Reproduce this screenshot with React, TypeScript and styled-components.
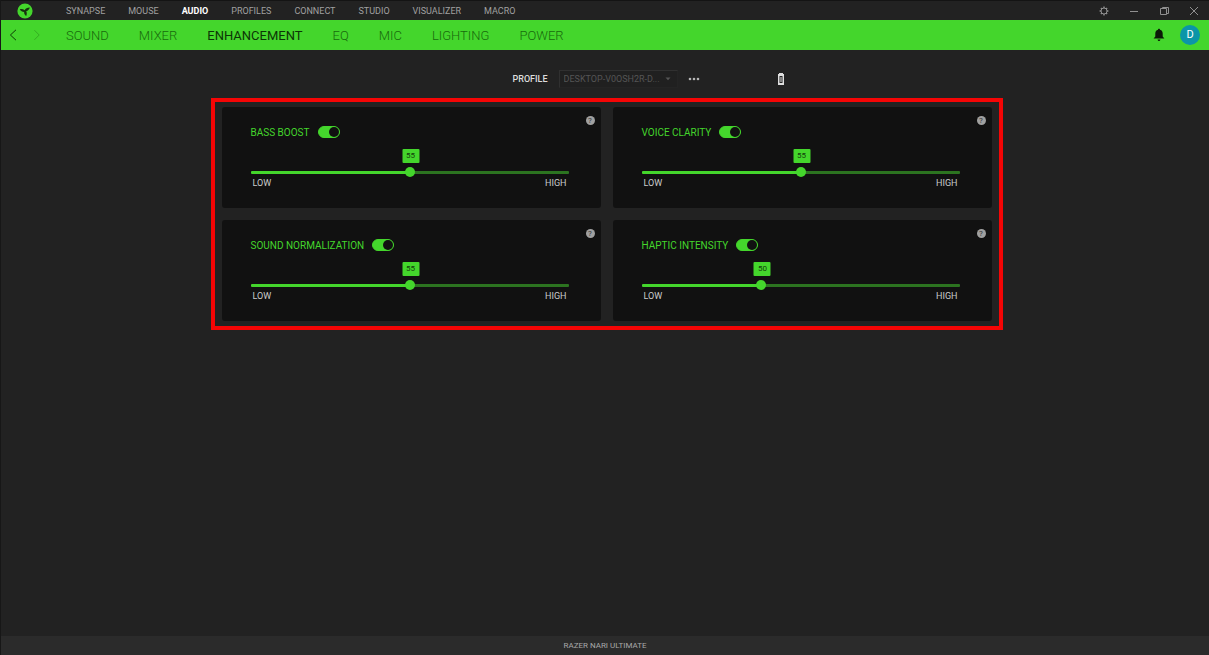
import React, { useState } from "react";
import styled, { createGlobalStyle } from "styled-components";

const GREEN = "#44d62c";

const GlobalStyle = createGlobalStyle`
  *, *::before, *::after { box-sizing: border-box; }
  body {
    margin: 0;
    background: #222222;
    color: #cccccc;
    font-family: Roboto, "Liberation Sans", sans-serif;
  }
  button, input, select { font: inherit; color: inherit; }
`;

const Window = styled.div`
  display: flex;
  flex-direction: column;
  min-height: 100vh;
  border-left: 1px solid #171717;
`;

const TitleBar = styled.header`
  display: flex;
  align-items: center;
  height: 20px;
  padding: 0 8px 0 16px;
  border-top: 1px solid #141414;
`;

const Logo = styled.svg`
  display: block;
  flex: none;
  width: 16px;
  height: 16px;
`;

const ModuleNav = styled.nav`
  display: flex;
  gap: 23px;
  flex: 1;
  margin-left: 33px;
`;

const ModuleLink = styled.a<{ $active?: boolean }>`
  color: ${(p) => (p.$active ? "#ffffff" : "#a0a0a0")};
  font-size: 9px;
  line-height: 12px;
  font-weight: ${(p) => (p.$active ? 700 : 400)};
  text-decoration: none;
`;

const WindowControls = styled.div`
  display: flex;
  gap: 16px;
`;

const IconButton = styled.button<{ $tone?: string }>`
  display: flex;
  align-items: center;
  justify-content: center;
  min-width: 14px;
  height: 14px;
  padding: 0;
  border: 0;
  background: none;
  color: ${(p) => p.$tone ?? "#909090"};
  cursor: pointer;
`;

const TabBar = styled.div`
  display: flex;
  align-items: center;
  height: 30px;
  padding: 0 9px 0 5px;
  background: ${GREEN};
`;

const History = styled.div`
  display: flex;
  gap: 10px;
`;

const TabNav = styled.nav`
  display: flex;
  gap: 30px;
  flex: 1;
  margin-left: 22px;
  padding-top: 2px;
`;

const TabLink = styled.a<{ $active?: boolean }>`
  color: ${(p) => (p.$active ? "#0c3506" : "#186a0c")};
  font-size: 13px;
  line-height: 18px;
  font-weight: ${(p) => (p.$active ? 400 : 300)};
  text-decoration: none;
`;

const Account = styled.div`
  display: flex;
  align-items: center;
  gap: 14px;
`;

const Avatar = styled.button`
  width: 20px;
  height: 20px;
  padding: 0;
  border: 0;
  border-radius: 50%;
  background: #0b95a8;
  color: #ffffff;
  font-size: 11px;
  line-height: 20px;
  text-align: center;
`;

const Main = styled.main`
  flex: 1;
  padding: 20px 16px 20px 19px;
`;

const ProfileRow = styled.div`
  display: grid;
  grid-template-columns: 1fr auto 1fr;
  align-items: center;
  height: 18px;
`;

const ProfilePicker = styled.div`
  display: flex;
  grid-column: 2;
  align-items: center;
`;

const ProfileLabel = styled.label`
  margin-right: 11px;
  color: #dddddd;
  font-size: 9px;
  line-height: 12px;
  font-weight: 500;
`;

const SelectBox = styled.div`
  display: flex;
  align-items: center;
  width: 119px;
  height: 18px;
  padding-right: 6px;
  border: 1px solid #303030;
  border-right-color: #242424;
  border-bottom-color: #242424;
  background: #202020;
  color: #555555;
`;

const Select = styled.select`
  flex: 1;
  min-width: 0;
  height: 16px;
  padding: 0 0 0 4px;
  border: 0;
  outline: 0;
  appearance: none;
  background: transparent;
  font-size: 9px;
  line-height: 16px;
  text-overflow: ellipsis;
`;

const MoreButton = styled(IconButton)`
  margin-left: 9px;
`;

const Battery = styled.svg`
  display: block;
  width: 8px;
  height: 12px;
  margin-left: 76px;
`;

const Frame = styled.section`
  display: grid;
  grid-template-columns: repeat(auto-fit, minmax(300px, 1fr));
  gap: 12px;
  max-width: 792px;
  margin: 10px auto 0;
  padding: 5px 7px;
  border: 4px solid #f50505;
`;

const Card = styled.article`
  padding: 9px 6px 19px 29px;
  border-radius: 3px;
  background: #111111;
`;

const HelpRow = styled.div`
  display: flex;
  justify-content: flex-end;
`;

const HelpButton = styled.button`
  width: 9px;
  height: 9px;
  padding: 0;
  border: 0;
  border-radius: 50%;
  background: #a0a0a0;
  color: #333333;
  font-size: 8px;
  line-height: 9px;
`;

const CardBody = styled.div`
  padding-right: 26px;
`;

const TitleRow = styled.div`
  display: flex;
  align-items: center;
  gap: 8px;
  height: 14px;
`;

const CardTitle = styled.label`
  padding-top: 2px;
  color: ${GREEN};
  font-size: 10px;
  line-height: 14px;
  font-weight: 400;
`;

const Toggle = styled.input`
  appearance: none;
  display: flex;
  justify-content: flex-start;
  width: 22px;
  height: 12px;
  margin: 0;
  border: 1px solid ${GREEN};
  border-radius: 6px;
  background: #111111;
  &::before {
    content: "";
    width: 10px;
    height: 10px;
    border-radius: 50%;
    background: ${GREEN};
  }
  &:checked {
    justify-content: flex-end;
    background: ${GREEN};
  }
  &:checked::before { background: #111111; }
`;

const SliderArea = styled.div`
  position: relative;
  padding-top: 28px;
`;

const Bubble = styled.output`
  position: absolute;
  top: 10px;
  width: 17px;
  height: 14px;
  margin-left: 1px;
  border-radius: 1px;
  transform: translateX(-50%);
  background: ${GREEN};
  color: #123d0b;
  font-size: 8px;
  line-height: 14px;
  text-align: center;
`;

const Range = styled.input`
  appearance: none;
  display: block;
  width: 100%;
  height: 10px;
  margin: 0;
  background: transparent;
  &::-webkit-slider-runnable-track {
    height: 3px;
    border-radius: 1px;
    background: linear-gradient(to right, ${GREEN} var(--fill), #2c7420 var(--fill));
  }
  &::-webkit-slider-thumb {
    appearance: none;
    width: 10px;
    height: 10px;
    margin-top: -4px;
    border-radius: 50%;
    background: ${GREEN};
  }
`;

const Scale = styled.div`
  display: flex;
  justify-content: space-between;
  padding: 0 2px;
  color: #cccccc;
  font-size: 9px;
  line-height: 12px;
`;

const Footer = styled.footer`
  height: 19px;
  background: #2b2b2b;
  color: #a8a8a8;
  font-size: 8px;
  line-height: 19px;
  text-align: center;
`;

const MODULES = ["SYNAPSE", "MOUSE", "AUDIO", "PROFILES", "CONNECT", "STUDIO", "VISUALIZER", "MACRO"];
const TABS = ["SOUND", "MIXER", "ENHANCEMENT", "EQ", "MIC", "LIGHTING", "POWER"];
const SETTINGS = [
  { id: "bass", title: "BASS BOOST", value: 55, max: 110 },
  { id: "voice", title: "VOICE CLARITY", value: 55, max: 110 },
  { id: "normalization", title: "SOUND NORMALIZATION", value: 55, max: 110 },
  { id: "haptic", title: "HAPTIC INTENSITY", value: 50, max: 134 },
];

function SettingCard({ id, title, value: initial, max }: (typeof SETTINGS)[number]) {
  const [value, setValue] = useState(initial);
  const [on, setOn] = useState(true);
  const ratio = value / max;
  const fill = `calc(5px + (100% - 10px) * ${ratio})`;
  return (
    <Card>
      <HelpRow>
        <HelpButton aria-label={`About ${title}`}>?</HelpButton>
      </HelpRow>
      <CardBody>
        <TitleRow>
          <CardTitle htmlFor={`${id}-on`}>{title}</CardTitle>
          <Toggle id={`${id}-on`} type="checkbox" role="switch" checked={on} onChange={(e) => setOn(e.target.checked)} />
        </TitleRow>
        <SliderArea>
          <Bubble htmlFor={id} style={{ left: fill }}>{value}</Bubble>
          <Range
            id={id}
            aria-label={title}
            type="range"
            min={0}
            max={max}
            value={value}
            onChange={(e) => setValue(Number(e.target.value))}
            style={{ "--fill": fill } as React.CSSProperties}
          />
        </SliderArea>
        <Scale>
          <span>LOW</span>
          <span>HIGH</span>
        </Scale>
      </CardBody>
    </Card>
  );
}

export default function App() {
  return (
    <Window>
      <GlobalStyle />
      <TitleBar>
        <Logo viewBox="0 0 16 16" aria-hidden="true">
          <circle cx="8" cy="8" r="7.6" fill={GREEN} />
          <path d="M2.800 6.200C4.600 5.600 6.300 6 7.600 7.200C8.600 5.500 10.400 4.400 12.800 4.500C12.400 6.300 11.100 7.700 9.200 8.300C10 9.700 10 11.400 9.200 13C7.800 12.100 7 10.500 7.100 8.900C5.300 8.900 3.700 7.900 2.800 6.200Z" fill="#17320f" />
        </Logo>
        <ModuleNav aria-label="Modules">
          {MODULES.map((m) => (
            <ModuleLink key={m} href="#" $active={m === "AUDIO"}>{m}</ModuleLink>
          ))}
        </ModuleNav>
        <WindowControls>
          <IconButton aria-label="Settings">
            <svg width="10" height="10" viewBox="0 0 10 10" fill="none" stroke="currentColor">
              <circle cx="5" cy="5" r="3" />
              <path strokeWidth="1.400" d="M5 .6v1.400M5 8v1.400M.6 5H2M8 5h1.400M1.900 1.900l1 1M7.100 7.100l1 1M8.100 1.900l-1 1M2.900 7.100l-1 1" />
            </svg>
          </IconButton>
          <IconButton aria-label="Minimize">
            <svg width="10" height="10" viewBox="0 0 10 10" stroke="currentColor"><path d="M1 5.5h8" /></svg>
          </IconButton>
          <IconButton aria-label="Restore">
            <svg width="10" height="10" viewBox="0 0 10 10" fill="none" stroke="currentColor">
              <path d="M1.500 2.500h6v6h-6zM3.500 2.500v-1h6v6h-2" />
            </svg>
          </IconButton>
          <IconButton aria-label="Close">
            <svg width="10" height="10" viewBox="0 0 10 10" stroke="currentColor"><path d="M1 1l8 8M9 1L1 9" /></svg>
          </IconButton>
        </WindowControls>
      </TitleBar>
      <TabBar>
        <History>
          <IconButton aria-label="Back" $tone="#0e3b07">
            <svg width="8" height="12" viewBox="0 0 8 12" fill="none" stroke="currentColor"><path d="M7 .8L1.400 6L7 11.200" /></svg>
          </IconButton>
          <IconButton aria-label="Forward" $tone="#35ad22">
            <svg width="8" height="12" viewBox="0 0 8 12" fill="none" stroke="currentColor"><path d="M1.400 1.200L6.200 6L1.400 10.800" /></svg>
          </IconButton>
        </History>
        <TabNav aria-label="Audio sections">
          {TABS.map((t) => (
            <TabLink key={t} href="#" $active={t === "ENHANCEMENT"}>{t}</TabLink>
          ))}
        </TabNav>
        <Account>
          <IconButton aria-label="Notifications" $tone="#0b1a08">
            <svg width="12" height="14" viewBox="0 0 12 14" fill="currentColor">
              <path d="M6 .8c.7 0 1 .4 1 1c1.800.4 2.700 1.900 2.700 3.800v2.800L11.400 10.600H.6L2.300 8.400V5.600C2.300 3.700 3.200 2.200 5 1.800C5 1.200 5.300.8 6 .8ZM4.600 11.400h2.800c0 .9-.6 1.500-1.400 1.500s-1.400-.6-1.400-1.500Z" />
            </svg>
          </IconButton>
          <Avatar aria-label="Account">D</Avatar>
        </Account>
      </TabBar>
      <Main>
        <ProfileRow>
          <ProfilePicker>
            <ProfileLabel htmlFor="profile">PROFILE</ProfileLabel>
            <SelectBox>
              <Select id="profile">
                <option>DESKTOP-V0OSH2R-D...</option>
              </Select>
              <svg width="6" height="4" viewBox="0 0 6 4" fill="currentColor" aria-hidden="true"><path d="M.5.5h5L3 3.200Z" /></svg>
            </SelectBox>
            <MoreButton aria-label="More profile actions" $tone="#b5b5b5">
              <svg width="12" height="4" viewBox="0 0 12 4" fill="currentColor">
                <circle cx="2" cy="2" r="1.300" /><circle cx="6" cy="2" r="1.300" /><circle cx="10" cy="2" r="1.300" />
              </svg>
            </MoreButton>
          </ProfilePicker>
          <Battery viewBox="0 0 8 12" role="img" aria-label="Battery">
            <path d="M2 0h4v1h1v11H1V1h1Z" fill="#dedede" />
            <path d="M2.500 3h3v7h-3Z" fill="#222222" />
            <path d="M3.500 4h1v5h-1Z" fill="#dedede" />
          </Battery>
        </ProfileRow>
        <Frame aria-label="Enhancement">
          {SETTINGS.map((s) => (
            <SettingCard key={s.id} {...s} />
          ))}
        </Frame>
      </Main>
      <Footer>RAZER NARI ULTIMATE</Footer>
    </Window>
  );
}
